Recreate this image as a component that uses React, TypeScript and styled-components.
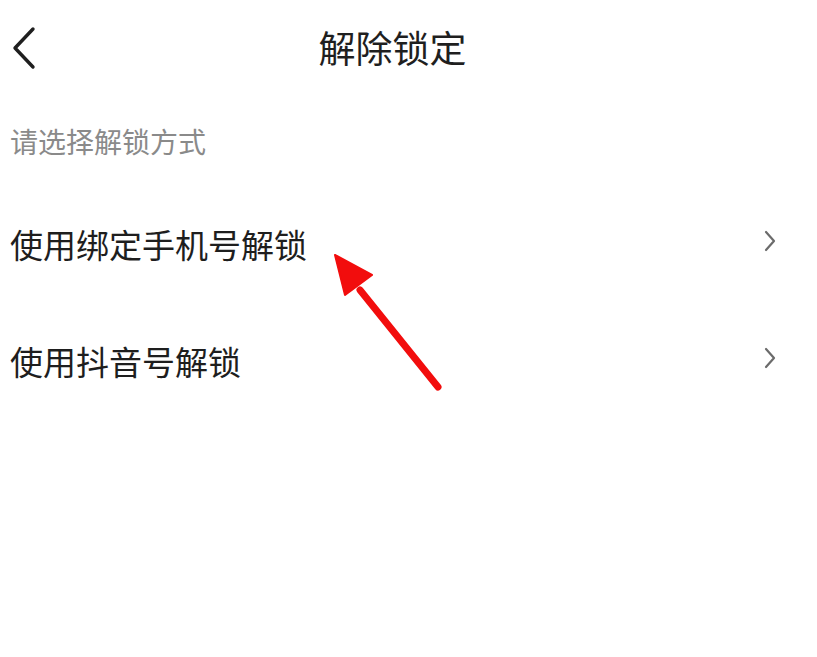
import React from 'react'
import styled, { createGlobalStyle } from 'styled-components'

const GlobalStyle = createGlobalStyle`
    html, body {
        margin: 0;
        padding: 0;
        background: #ffffff;
    }
    body {
        font-family: "Noto Sans CJK SC", "Noto Sans", sans-serif;
    }
`

const options = ['使用绑定手机号解锁', '使用抖音号解锁']

const BackIcon = () => (
    <svg width='26' height='44' viewBox='0 0 26 44'>
        <path d='M22 3 L4 22 L22 41' fill='none' stroke='#1f1f1f' strokeWidth='3.4' strokeLinecap='round' strokeLinejoin='round' />
    </svg>
)

const ChevronIcon = () => (
    <svg width='14' height='22' viewBox='0 0 14 22'>
        <path d='M3 2 L11 11 L3 20' fill='none' stroke='#6b6b6b' strokeWidth='2.2' strokeLinecap='round' strokeLinejoin='round' />
    </svg>
)

const App: React.FC = () => {
    return (
        <>
            <GlobalStyle />
            <StyledPage>
                <Header>
                    <BackButton><BackIcon /></BackButton>
                    <Title>解除锁定</Title>
                    <HeaderSpacer />
                </Header>
                <SectionLabel>请选择解锁方式</SectionLabel>
                <OptionList>
                    {options.map((item, index) => (
                        <OptionRow key={index}>
                            <span>{item}</span>
                            <ChevronIcon />
                        </OptionRow>
                    ))}
                </OptionList>
                <Pointer width='120' height='150' viewBox='0 0 120 150'>
                    <line x1='28' y1='38' x2='106' y2='135' stroke='#f20d0d' strokeWidth='7' strokeLinecap='round' />
                    <polygon points='3,3 40,23 13,43' fill='#f20d0d' stroke='#f20d0d' strokeWidth='2' strokeLinejoin='round' />
                </Pointer>
            </StyledPage>
        </>
    )
}

export default App

const StyledPage = styled.div`
    position: relative;
    width: 817px;
    height: 657px;
    overflow: hidden;
    background: #ffffff;
`

const Header = styled.header`
    display: flex;
    align-items: center;
    height: 95px;
`

const BackButton = styled.div`
    display: flex;
    align-items: center;
    justify-content: flex-start;
    width: 48px;
    padding-left: 11px;
    box-sizing: border-box;
    margin-top: 1px;
`

const Title = styled.div`
    flex: 1;
    text-align: center;
    font-size: 37px;
    color: #1f1f1f;
    line-height: 1;
    margin-bottom: 1px;
`

const HeaderSpacer = styled.div`
    width: 80px;
`

const SectionLabel = styled.div`
    margin-top: 26px;
    padding: 0 10px;
    font-size: 28px;
    line-height: 40px;
    height: 40px;
    color: #8a8a8a;
`

const OptionList = styled.div`
    margin-top: 25px;
    display: flex;
    flex-direction: column;
`

const OptionRow = styled.div`
    display: flex;
    align-items: center;
    justify-content: space-between;
    height: 117px;
    padding: 0 40px 0 10px;
    font-size: 33px;
    color: #1e1e1e;

    span {
        line-height: 1;
    }

    svg {
        margin-top: -8px;
    }
`

const Pointer = styled.svg`
    position: absolute;
    left: 332px;
    top: 252px;
`
